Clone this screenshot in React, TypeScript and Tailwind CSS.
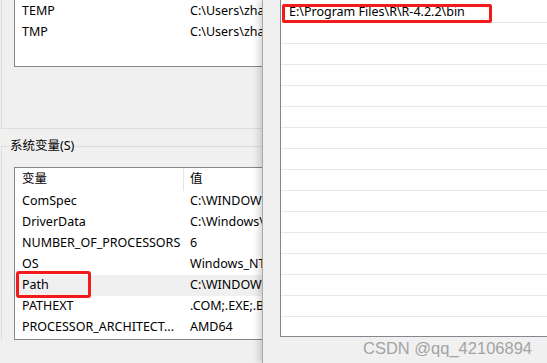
import React from "react";

const font = { fontFamily: '"Noto Sans", "Noto Sans CJK SC", sans-serif' };

function Row({ name, value, selected, boxed }: { name: string; value: string; selected?: boolean; boxed?: boolean }) {
  return (
    <div className={`relative flex h-[21px] items-center whitespace-nowrap ${selected ? "bg-[#f0f0f0]" : ""}`}>
      <div className="w-[169px] shrink-0 overflow-hidden pl-[7px]">{name}</div>
      <div className="pl-[6px]">{value}</div>
      {boxed && (
        <div className="absolute left-[1px] top-[-4px] h-[27px] w-[75px] rounded-[3px] border-[3px] border-[#f21a1a]" />
      )}
    </div>
  );
}

export default function App() {
  const sys: [string, string][] = [
    ["ComSpec", "C:\\WINDOWS\\system32\\cmd.exe"],
    ["DriverData", "C:\\Windows\\System32\\Drivers\\DriverData"],
    ["NUMBER_OF_PROCESSORS", "6"],
    ["OS", "Windows_NT"],
    ["Path", "C:\\WINDOWS\\system32;C:\\WINDOWS"],
    ["PATHEXT", ".COM;.EXE;.BAT;.CMD;.VBS"],
    ["PROCESSOR_ARCHITECT...", "AMD64"],
  ];
  const lines = Array.from({ length: 15 });
  return (
    <div className="relative flex h-[363px] w-[547px] overflow-hidden bg-[#f0f0f0] text-[12.5px] text-black" style={font}>
      {/* left window */}
      <div className="w-[262px] shrink-0 overflow-hidden">
        <div className="w-[420px]">
          {/* user variables group */}
          <div className="ml-[1px] h-[129px] border-b border-l border-[#dcdcdc]">
            <div className="ml-[12px] h-[67px] border-b border-l border-[#828790] bg-white pt-[1px]">
              <Row name="TEMP" value="C:\Users\zhangsan\AppData\Local\Temp" />
              <Row name="TMP" value="C:\Users\zhangsan\AppData\Local\Temp" />
            </div>
          </div>
          {/* system variables group */}
          <div className="ml-[1px] mt-[8px]">
            <div className="flex h-[18px]">
              <div className="mt-[9px] h-[9px] w-[8px] border-l border-t border-[#dcdcdc]" />
              <div className="px-[1px] leading-[18px]">系统变量(S)</div>
              <div className="mt-[9px] flex-1 border-t border-[#dcdcdc]" />
            </div>
            <div className="border-l border-[#dcdcdc] pl-[12px] pt-[12px]">
              <div className="border-b border-l border-t border-[#828790] bg-white pb-[1px]">
                <div className="flex h-[23px] items-center whitespace-nowrap">
                  <div className="flex h-full w-[169px] shrink-0 items-center border-r border-[#e5e5e5] pl-[7px]">变量</div>
                  <div className="pl-[6px]">值</div>
                </div>
                {sys.map(([n, v]) => (
                  <Row key={n} name={n} value={v} selected={n === "Path"} boxed={n === "Path"} />
                ))}
              </div>
            </div>
          </div>
        </div>
      </div>

      {/* right window (edit path dialog) */}
      <div className="relative z-10 flex-1 overflow-hidden border-l border-[#a9a9a9] bg-[#f0f0f0] shadow-[-4px_0_6px_rgba(0,0,0,0.14)]">
        <div className="ml-[17px] h-[337px] w-[400px] border-b border-l border-[#828790] bg-white pt-[2px]">
          {lines.map((_, i) => (
            <div key={i} className="relative flex h-[21px] items-center border-b border-[#e9e9e9] pl-[8px] pt-[1px] whitespace-nowrap">
              {i === 0 && (
                <>
                  <span>E:\Program Files\R\R-4.2.2\bin</span>
                  <div className="absolute left-[1px] top-[2px] h-[19px] w-[210px] rounded-[2px] border-[3px] border-[#f21a1a]" />
                </>
              )}
            </div>
          ))}
        </div>
      </div>

      {/* watermark */}
      <div
        className="absolute left-[363px] top-[336px] z-20 text-[16.5px] leading-normal text-[#a3a3a3]"
        style={{ fontFamily: '"Liberation Sans", Arial, sans-serif' }}
      >
        CSDN @qq_42106894
      </div>
    </div>
  );
}
